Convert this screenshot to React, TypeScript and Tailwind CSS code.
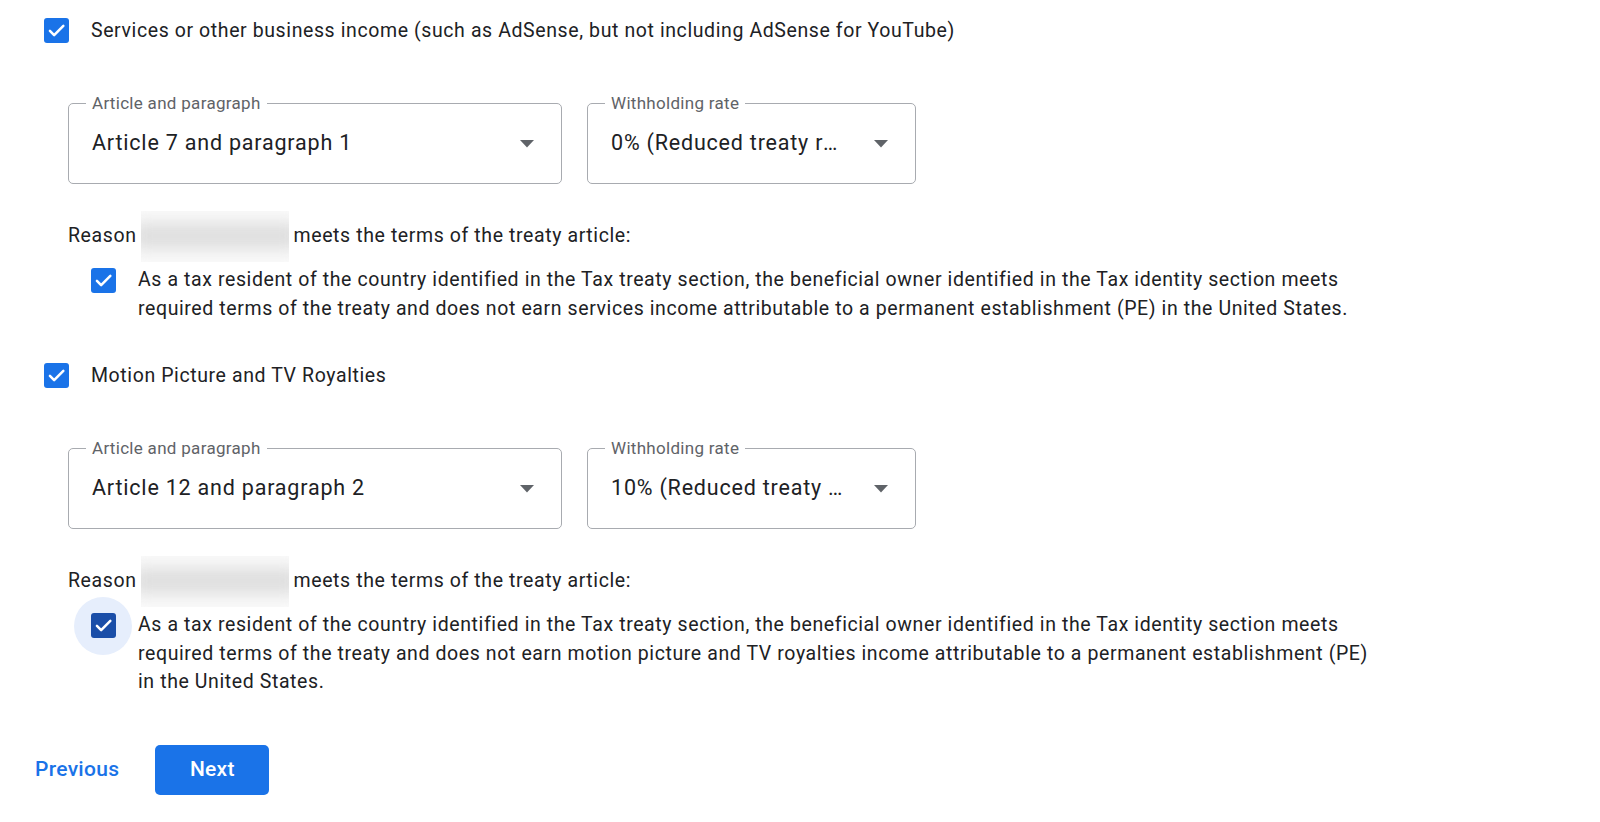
import React from 'react';

const Check = ({ dark = false }: { dark?: boolean }) => (
  <div
    className={`w-[25px] h-[25px] rounded-[3px] flex items-center justify-center shrink-0 ${
      dark ? 'bg-[#1a4ea8]' : 'bg-[#1a73e8]'
    }`}
  >
    <svg width="21" height="21" viewBox="0 0 24 24" fill="none">
      <path d="M4.5 12.5l4.8 4.8L19.8 6.8" stroke="white" strokeWidth="2.9" strokeLinecap="round" strokeLinejoin="round" />
    </svg>
  </div>
);

const Select = ({ label, value, width }: { label: string; value: string; width: string }) => (
  <div className={`relative h-[81px] ${width} border border-[#a8abb0] rounded-[5px] flex items-center pl-[23px] pr-[27px]`}>
    <span className="absolute -top-[12px] left-[17px] px-[6px] bg-white text-[17px] text-[#5f6368] leading-[22px] tracking-[0.3px]">
      {label}
    </span>
    <span className="flex-1 min-w-0 truncate text-[21.5px] text-[#202124] tracking-[0.8px]">{value}</span>
    <svg width="14" height="8" viewBox="0 0 14 8" className="ml-[28px] shrink-0">
      <path d="M0 0h14L7 7.5z" fill="#5f6368" />
    </svg>
  </div>
);

const Reason = () => (
  <div className="flex items-center h-[28px] ml-[24px] text-[19.5px] text-[#202124] tracking-[0.6px]">
    <span>Reason</span>
    <div className="w-[148px] h-[51px] ml-[4px] mr-[5px] overflow-hidden shrink-0 bg-[#fbfbfb]">
      <div className="w-[170px] h-[26px] mt-[12px] -ml-[10px] bg-[#dcdcdc] blur-[9px]" />
    </div>
    <span>meets the terms of the treaty article:</span>
  </div>
);

const Statement = ({ text, focused = false }: { text: string; focused?: boolean }) => (
  <div className="flex items-start ml-[46px] mt-[16px]">
    <div className="relative w-[26px] h-[29px] flex items-center justify-center shrink-0">
      {focused && <div className="absolute w-[58px] h-[58px] rounded-full bg-[#e6eefc]" />}
      <div className="relative">
        <Check dark={focused} />
      </div>
    </div>
    <p className="ml-[22px] w-[1242px] text-[19.5px] leading-[28.5px] text-[#202124] tracking-[0.6px]">{text}</p>
  </div>
);

const Section = ({
  title,
  article,
  rate,
  statement,
  focused,
  first,
}: {
  title: string;
  article: string;
  rate: string;
  statement: string;
  focused?: boolean;
  first?: boolean;
}) => (
  <div className={first ? '' : 'mt-[40px]'}>
    <div className="flex items-center h-[25px]">
      <Check />
      <span className="ml-[22px] text-[19.5px] text-[#202124] tracking-[0.6px]">{title}</span>
    </div>
    <div className="flex gap-[25px] ml-[24px] mt-[60px]">
      <Select label="Article and paragraph" value={article} width="w-[494px]" />
      <Select label="Withholding rate" value={rate} width="w-[329px]" />
    </div>
    <div className="mt-[38px]">
      <Reason />
    </div>
    <Statement text={statement} focused={focused} />
  </div>
);

export default function App() {
  return (
    <div className="min-h-screen bg-white pt-[18px] pl-[44px]" style={{ fontFamily: 'Roboto, "Liberation Sans", sans-serif' }}>
      <Section
        first
        title="Services or other business income (such as AdSense, but not including AdSense for YouTube)"
        article="Article 7 and paragraph 1"
        rate="0% (Reduced treaty rate)"
        statement="As a tax resident of the country identified in the Tax treaty section, the beneficial owner identified in the Tax identity section meets required terms of the treaty and does not earn services income attributable to a permanent establishment (PE) in the United States."
      />
      <Section
        title="Motion Picture and TV Royalties"
        article="Article 12 and paragraph 2"
        rate="10% (Reduced treaty rate)"
        focused
        statement="As a tax resident of the country identified in the Tax treaty section, the beneficial owner identified in the Tax identity section meets required terms of the treaty and does not earn motion picture and TV royalties income attributable to a permanent establishment (PE) in the United States."
      />
      <div className="flex items-center mt-[48px] -ml-[9px]">
        <button className="text-[21px] font-medium text-[#1a73e8] tracking-[0.3px]">Previous</button>
        <button className="ml-[36px] w-[114px] h-[50px] rounded-[5px] bg-[#1a73e8] text-white text-[21px] font-medium tracking-[0.3px]">
          Next
        </button>
      </div>
    </div>
  );
}
